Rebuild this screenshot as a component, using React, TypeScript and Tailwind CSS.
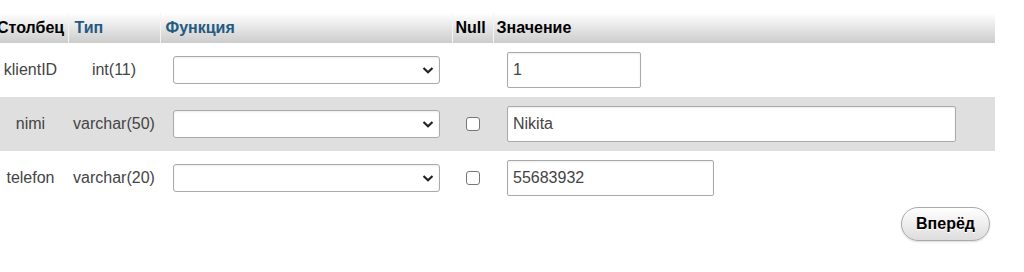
import { Fragment } from "react";

interface Field {
  name: string;
  type: string;
  nullable: boolean;
  value: string;
  inputWidth: string;
}

const fields: Field[] = [
  { name: "klientID", type: "int(11)", nullable: false, value: "1", inputWidth: "w-[134px]" },
  { name: "nimi", type: "varchar(50)", nullable: true, value: "Nikita", inputWidth: "w-[449px]" },
  { name: "telefon", type: "varchar(20)", nullable: true, value: "55683932", inputWidth: "w-[207px]" },
];

function FunctionSelect() {
  return (
    <div className="relative mx-auto h-[28px] w-[267px]">
      <select className="h-full w-full appearance-none rounded-[3px] border border-[#aaa] bg-white px-1 shadow-[inset_0_1px_2px_rgba(0,0,0,0.08)] outline-none">
        <option value=""></option>
      </select>
      {/* chevron */}
      <svg
        className="pointer-events-none absolute right-[6px] top-1/2 h-[12px] w-[12px] -translate-y-1/2"
        viewBox="0 0 12 12"
        fill="none"
      >
        <path d="M1.5 4 6 8.3 10.5 4" stroke="#222" strokeWidth="2.2" />
      </svg>
    </div>
  );
}

export default function App() {
  return (
    <div className="min-h-[272px] w-[1024px] bg-white pt-[13px] font-['Liberation_Sans',Arial,sans-serif] text-[16px] text-[#444]">
      <table className="ml-[-7px] w-[1002px] table-fixed border-collapse">
        <colgroup>
          <col className="w-[75px]" />
          <col className="w-[92px]" />
          <col className="w-[292px]" />
          <col className="w-[41px]" />
          <col className="w-[502px]" />
        </colgroup>
        <thead>
          <tr className="h-[30px] bg-gradient-to-b from-white to-[#ccc] text-left text-[16px] font-bold">
            <th className="pl-[4px] text-black">Столбец</th>
            <th className="border-l border-[#f4f4f4] pl-[6px] text-[#235a81]">Тип</th>
            <th className="border-l border-[#f4f4f4] pl-[5px] text-[#235a81]">Функция</th>
            <th className="border-l border-[#f4f4f4] pl-[3px] text-black">Null</th>
            <th className="border-l border-[#f4f4f4] pl-[3px] text-black">Значение</th>
          </tr>
        </thead>
        <tbody>
          {fields.map((f, i) => (
            <Fragment key={f.name}>
              <tr className={i % 2 === 1 ? "h-[54px] bg-[#dfdfdf]" : "h-[54px] bg-white"}>
                <td className="text-center">{f.name}</td>
                <td className="text-center">{f.type}</td>
                <td>
                  <FunctionSelect />
                </td>
                <td className="text-center">
                  {f.nullable && (
                    <span className="inline-block h-[14px] w-[14px] translate-y-[2px] rounded-[3px] border border-[#767676] bg-white" />
                  )}
                </td>
                <td className="pl-[14px]">
                  <input
                    type="text"
                    defaultValue={f.value}
                    className={`${f.inputWidth} h-[36px] rounded-[2px] border border-[#aaa] bg-white px-[5px] text-[16px] text-[#444] shadow-[inset_0_1px_2px_rgba(0,0,0,0.08)] outline-none`}
                  />
                </td>
              </tr>
            </Fragment>
          ))}
        </tbody>
      </table>
      <div className="flex w-[995px] justify-end pr-[5px] pt-[2px]">
        <button className="h-[34px] w-[89px] rounded-full border border-[#aaa] bg-gradient-to-b from-white to-[#ddd] text-[16px] font-bold text-black shadow-[0_1px_2px_rgba(0,0,0,0.15)] [text-shadow:0_1px_0_#fff]">
          Вперёд
        </button>
      </div>
    </div>
  );
}
